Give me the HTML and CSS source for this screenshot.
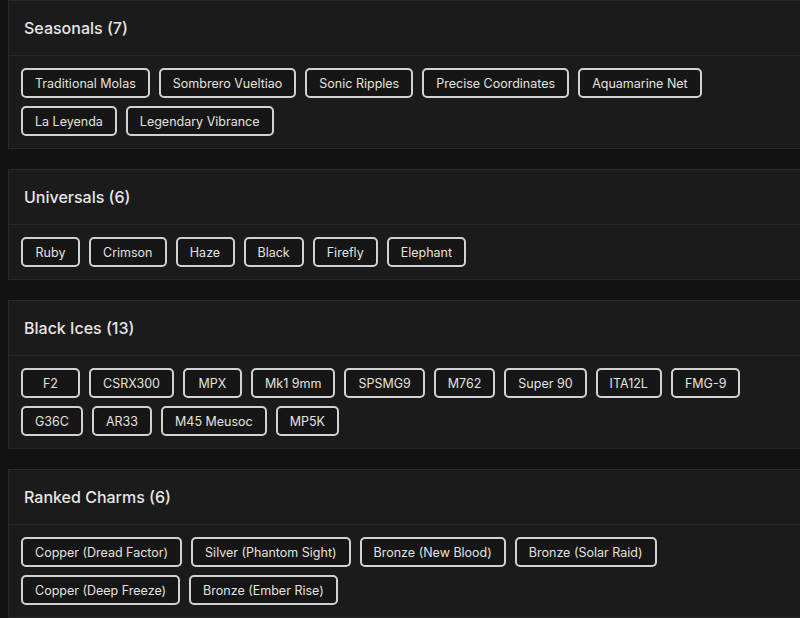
FILE: index.html
```html
<!DOCTYPE html>
<html>
<head>
<meta charset="utf-8">
<link rel="stylesheet" href="styles.css">
</head>
<body>
<div class="page">
  <section class="card">
    <h2 class="card-title">Seasonals (7)</h2>
    <div class="tags">
      <span class="tag">Traditional Molas</span>
      <span class="tag">Sombrero Vueltiao</span>
      <span class="tag">Sonic Ripples</span>
      <span class="tag">Precise Coordinates</span>
      <span class="tag">Aquamarine Net</span>
      <span class="tag">La Leyenda</span>
      <span class="tag">Legendary Vibrance</span>
    </div>
  </section>
  <section class="card">
    <h2 class="card-title">Universals (6)</h2>
    <div class="tags">
      <span class="tag">Ruby</span>
      <span class="tag">Crimson</span>
      <span class="tag">Haze</span>
      <span class="tag">Black</span>
      <span class="tag">Firefly</span>
      <span class="tag">Elephant</span>
    </div>
  </section>
  <section class="card">
    <h2 class="card-title">Black Ices (13)</h2>
    <div class="tags">
      <span class="tag">F2</span>
      <span class="tag">CSRX300</span>
      <span class="tag">MPX</span>
      <span class="tag">Mk1 9mm</span>
      <span class="tag">SPSMG9</span>
      <span class="tag">M762</span>
      <span class="tag">Super 90</span>
      <span class="tag">ITA12L</span>
      <span class="tag">FMG-9</span>
      <span class="tag">G36C</span>
      <span class="tag">AR33</span>
      <span class="tag">M45 Meusoc</span>
      <span class="tag">MP5K</span>
    </div>
  </section>
  <section class="card">
    <h2 class="card-title">Ranked Charms (6)</h2>
    <div class="tags">
      <span class="tag">Copper (Dread Factor)</span>
      <span class="tag">Silver (Phantom Sight)</span>
      <span class="tag">Bronze (New Blood)</span>
      <span class="tag">Bronze (Solar Raid)</span>
      <span class="tag">Copper (Deep Freeze)</span>
      <span class="tag">Bronze (Ember Rise)</span>
    </div>
  </section>
</div>
</body>
</html>
```
FILE: styles.css
```css
html, body {
  margin: 0;
  padding: 0;
  background: #121212;
  overflow: hidden;
}
.page {
  padding: 0 0 0 8px;
  display: flex;
  flex-direction: column;
  gap: 20px;
  font-family: Inter, "Noto Sans", sans-serif;
}
.card {
  background: #1b1b1b;
  border: 1px solid #2a2a2a;
  margin-right: -20px;
}
.card-title {
  margin: 0;
  padding: 16px 15px;
  line-height: 22px;
  font-size: 16px;
  font-weight: 500;
  color: #e6e6e6;
  border-bottom: 1px solid #2a2a2a;
}
.tags {
  padding: 12px 40px 12px 12px;
  display: flex;
  flex-wrap: wrap;
  gap: 8px 9px;
}
.tag {
  box-sizing: border-box;
  min-width: 59px;
  height: 30px;
  line-height: 27px;
  padding: 0 12px;
  text-align: center;
  border: 2px solid #d2d2d2;
  border-radius: 5px;
  background: #161616;
  color: #e4e2de;
  font-size: 12.5px;
}
```
